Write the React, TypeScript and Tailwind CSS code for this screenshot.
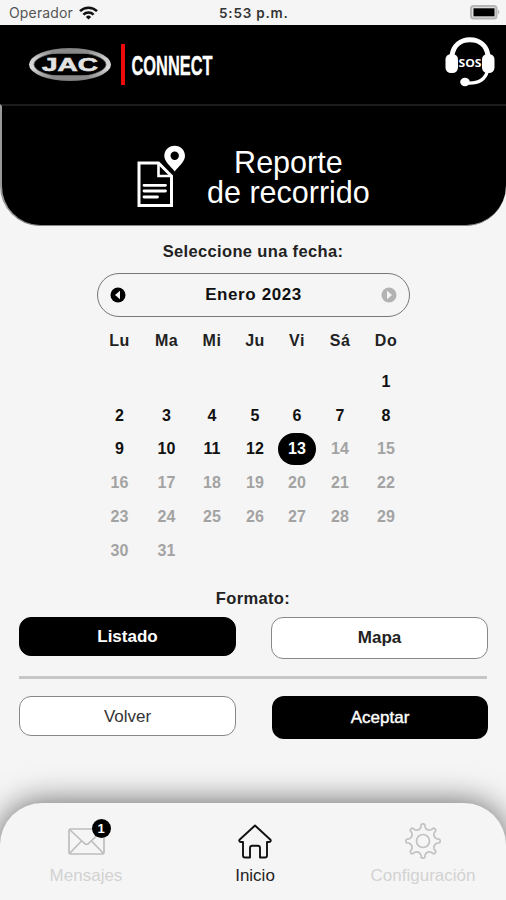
import clsx from "clsx";
import { useState } from "react";

const WEEKDAYS = ["Lu", "Ma", "Mi", "Ju", "Vi", "Sá", "Do"];
const TODAY = 13;
// January 2023 starts on a Sunday
const FIRST_OFFSET = 6;
const DAYS = 31;

const calendarGrid =
  "grid grid-cols-[45px_49px_42px_44px_40px_46px_46px] justify-items-center items-center";

function polar(radius: number, degrees: number) {
  const a = (degrees * Math.PI) / 180;
  return `${(18 + radius * Math.sin(a)).toFixed(2)} ${(18 - radius * Math.cos(a)).toFixed(2)}`;
}

// Eight teeth with rounded valleys between them
const gearPath =
  Array.from({ length: 8 }, (_, i) => {
    const t = i * 45;
    return `${i === 0 ? "M" : "L"}${polar(16.6, t - 6)}Q${polar(17.8, t)} ${polar(16.6, t + 6)}L${polar(
      13.9,
      t + 9
    )}Q${polar(10.8, t + 22.5)} ${polar(13.9, t + 36)}`;
  }).join("") + "Z";

function StatusBar() {
  return (
    <div className="relative h-[25px] flex items-center justify-between pl-[9px] pr-[6px] font-['Inter',sans-serif]">
      <div className="flex items-center gap-[6px]">
        <span className="text-[14px] leading-[25px] tracking-[0.15px] text-[#555]">
          Operador
        </span>
        <svg width="19" height="14" viewBox="0 0 19 14" fill="none" stroke="#111" strokeWidth="2.5">
          <path d="M1 5.2a12.2 12.2 0 0 1 17 0" />
          <path d="M4.4 8.7a7.3 7.3 0 0 1 10.2 0" />
          <path d="M9.5 13.4 6.9 10.9a3.7 3.7 0 0 1 5.2 0z" fill="#111" stroke="none" />
        </svg>
      </div>
      <span className="absolute left-[219px] top-[1px] text-[13.5px] leading-[25px] font-semibold tracking-[0.8px] text-[#333] whitespace-nowrap">
        5:53 p.m.
      </span>
      <svg width="30" height="15" viewBox="0 0 30 15">
        <rect x="1" y="1" width="25.5" height="12.5" rx="2.5" fill="#ddd" stroke="#b5b5b5" strokeWidth="2" />
        <rect x="3.5" y="3.3" width="21" height="8" fill="#000" />
        <path d="M28 4.8c1.8.8 1.8 4 0 4.8z" fill="#b5b5b5" />
      </svg>
    </div>
  );
}

function Brand() {
  return (
    <div className="flex items-center">
      <svg width="84" height="36" viewBox="0 0 84 36">
        <defs>
          <linearGradient id="chrome" x1="0" y1="0" x2="0" y2="1">
            <stop offset="0" stopColor="#777" />
            <stop offset="0.3" stopColor="#ccc" />
            <stop offset="0.6" stopColor="#ddd" />
            <stop offset="1" stopColor="#777" />
          </linearGradient>
        </defs>
        <ellipse cx="42" cy="17.5" rx="41" ry="16.5" fill="url(#chrome)" />
        <ellipse cx="42" cy="17.5" rx="36" ry="12.5" fill="#000" stroke="#555" strokeWidth="0.8" />
        <path d="M23 5.5h38M23 29.5h38" stroke="#888" strokeWidth="2.5" />
        <text
          x="14"
          y="23.5"
          textLength="56"
          lengthAdjust="spacingAndGlyphs"
          fontFamily="Liberation Sans, sans-serif"
          fontWeight="700"
          fontSize="18"
          fill="#e2e2e2"
          stroke="#e2e2e2"
          strokeWidth="0.6"
        >
          JAC
        </text>
      </svg>
      <div className="ml-[9px] h-[41px] w-[4px] bg-[#ee0a0a]" />
      <svg className="ml-[5px] overflow-visible" width="90" height="40" viewBox="0 0 90 40">
        <text
          x="1.5"
          y="30"
          textLength="81"
          lengthAdjust="spacingAndGlyphs"
          fontFamily="Liberation Sans, sans-serif"
          fontWeight="700"
          fontSize="28.5"
          fill="#fff"
          stroke="#fff"
          strokeWidth="0.4"
        >
          CONNECT
        </text>
      </svg>
    </div>
  );
}

function SosIcon() {
  return (
    <svg width="50" height="50" viewBox="0 0 50 50" fill="none" stroke="#fff">
      <path d="M7 18.5C8.500 8.500 15.500 2.800 25 2.800S41.500 8.500 43 18.500" strokeWidth="5" />
      <rect x="0.5" y="17" width="12.5" height="19" rx="5.5" fill="#fff" stroke="none" />
      <rect x="37" y="17" width="12.5" height="19" rx="5.5" fill="#fff" stroke="none" />
      <path d="M42.5 34c-2.500 9-9 13-21.500 12" strokeWidth="3.2" />
      <ellipse cx="20" cy="45" rx="4.8" ry="4.2" fill="#fff" stroke="none" />
      <text
        x="13.5"
        y="30"
        textLength="23"
        lengthAdjust="spacingAndGlyphs"
        fontFamily="Open Sans, sans-serif"
        fontWeight="700"
        fontSize="11"
        fill="#fff"
        stroke="none"
      >
        SOS
      </text>
    </svg>
  );
}

function ReportIcon() {
  return (
    <svg width="49" height="63" viewBox="0 0 49 63" fill="none" stroke="#fff">
      <path d="M2 18h19.5l13 13v29.5H2z" strokeWidth="3" />
      <path d="M21.5 18v13h13" strokeWidth="2.6" />
      <path d="M7 40.3h21.5M7 46h21.5M7 52h13.5" strokeWidth="2.8" strokeLinecap="round" />
      <path
        d="M37.7 0.8C31.5 0.8 27.3 5.4 27.3 11c0 5.5 6.5 10.5 10.4 15.5C41.6 21.5 48 16.5 48 11 48 5.4 43.8 0.8 37.7 0.8zM37.7 6.6a4.2 4.2 0 1 1 0 8.4 4.2 4.2 0 0 1 0-8.4z"
        fill="#fff"
        fillRule="evenodd"
        stroke="none"
      />
    </svg>
  );
}

function ArrowButton({ direction, disabled }: { direction: "left" | "right"; disabled?: boolean }) {
  return (
    <button aria-label={direction === "left" ? "Anterior" : "Siguiente"} disabled={disabled}>
      <svg
        width="16"
        height="16"
        viewBox="0 0 16 16"
        className={clsx(disabled ? "text-[#b3b3b3]" : "text-black", direction === "right" && "rotate-180")}
      >
        <circle cx="8" cy="8" r="7.5" fill="currentColor" />
        <path d="M10 3.8v8.4L5 8z" fill="#f5f5f5" />
      </svg>
    </button>
  );
}

function Calendar() {
  const [selected, setSelected] = useState(TODAY);
  const days = Array.from({ length: DAYS }, (_, i) => i + 1);

  return (
    <div className="w-[313px] ml-[97px]">
      <div className="mt-[11px] h-[44px] rounded-full border border-[#777] flex items-center justify-between px-[12px]">
        <ArrowButton direction="left" />
        <span className="text-[17px] font-bold tracking-[0.6px] text-[#111]">Enero 2023</span>
        <ArrowButton direction="right" disabled />
      </div>

      <div className={clsx(calendarGrid, "mt-[12px] h-[24px] text-[16px] font-bold tracking-[0.5px] text-[#222]")}>
        {WEEKDAYS.map((day) => (
          <span key={day}>{day}</span>
        ))}
      </div>

      <div className={clsx(calendarGrid, "mt-[12px] auto-rows-[33.8px] text-[16px] font-bold")}>
        {Array.from({ length: FIRST_OFFSET }, (_, i) => (
          <span key={`empty-${i}`} />
        ))}
        {days.map((day) => (
          <button
            key={day}
            disabled={day > TODAY}
            onClick={() => setSelected(day)}
            className={clsx(
              "w-[38px] h-[32px] rounded-full",
              day === selected && "bg-black text-white",
              day !== selected && (day > TODAY ? "text-[#a3a3a3]" : "text-[#111]")
            )}
          >
            {day}
          </button>
        ))}
      </div>
    </div>
  );
}

function MailIcon() {
  return (
    <svg width="37" height="27" viewBox="0 0 37 27" fill="none" stroke="#bdbdbd" strokeWidth="1.7">
      <rect x="1" y="1" width="35" height="25" rx="1.5" />
      <path d="M1.5 1.5 15.5 14.5c2 2.5 4 2.5 6 0L35.5 1.5M1.5 25.5 13.5 13M35.5 25.5 23.5 13" />
    </svg>
  );
}

function HomeIcon() {
  return (
    <svg width="34" height="35" viewBox="0 0 34 35" fill="none" stroke="#111" strokeWidth="1.9" strokeLinejoin="round">
      <path d="M17 1.5 1.8 15.5c-1 1-.5 2.5 1 2.5H5v13.5c0 1.200.8 2 2 2h5V24c0-1.500.8-2.300 2.300-2.300h5.400c1.500 0 2.300.8 2.300 2.300v9.500h5c1.200 0 2-.8 2-2V18h2.200c1.500 0 2-1.500 1-2.500z" />
    </svg>
  );
}

function GearIcon() {
  return (
    <svg width="36" height="36" viewBox="0 0 36 36" fill="none" stroke="#c2c2c2" strokeWidth="1.7" strokeLinejoin="round">
      <circle cx="18" cy="18" r="6.5" />
      <path d={gearPath} />
    </svg>
  );
}

function BottomNav() {
  return (
    <nav className="h-[97px] shrink-0 rounded-t-[42px] bg-[#f5f5f5] shadow-[0_0_32px_rgba(0,0,0,0.62)] pl-[2px] grid grid-cols-[168px_170px_166px] text-[17px] leading-[20px]">
      <a className="flex flex-col items-center text-[#d2d2d2]">
        <div className="relative h-[63px] pt-[25px]">
          <MailIcon />
          <span className="absolute left-[24px] top-[16px] size-[19px] rounded-full bg-black text-white text-[13px] leading-[19px] font-bold text-center">
            1
          </span>
        </div>
        Mensajes
      </a>
      <a className="flex flex-col items-center text-[#222]">
        <div className="h-[63px] pt-[21px]">
          <HomeIcon />
        </div>
        Inicio
      </a>
      <a className="flex flex-col items-center text-[#d2d2d2]">
        <div className="h-[63px] pt-[20px]">
          <GearIcon />
        </div>
        Configuración
      </a>
    </nav>
  );
}

export default function App() {
  const [format, setFormat] = useState("Listado");

  return (
    <div className="w-[506px] h-[900px] overflow-hidden flex flex-col bg-[#f5f5f5] font-['Liberation_Sans',Arial,sans-serif]">
      <StatusBar />

      <header className="h-[79px] bg-black flex items-center justify-between pl-[28px] pr-[11px]">
        <Brand />
        <div className="-mt-[6px]">
          <SosIcon />
        </div>
      </header>

      <section className="h-[122px] bg-black rounded-b-[40px] border-t-2 border-t-[#1c1c1c] border-l-2 border-l-[#999] border-b border-b-[#888] flex pl-[135px]">
        <div className="mt-[39px]">
          <ReportIcon />
        </div>
        <h1 className="ml-[21px] mt-[41px] text-[30.5px] leading-[30px] text-white text-center whitespace-nowrap">
          Reporte
          <br />
          de recorrido
        </h1>
      </section>

      <main className="flex-1">
        <p className="mt-[14px] text-[16.5px] leading-[22px] font-bold tracking-[0.35px] text-center text-[#222]">
          Seleccione una fecha:
        </p>

        <Calendar />

        <p className="mt-[19px] text-[16.5px] leading-[22px] font-bold tracking-[0.35px] text-center text-[#222]">
          Formato:
        </p>

        <div className="mt-[8px] pl-[19px] pr-[18px] flex items-start justify-between text-[17px] font-bold">
          {["Listado", "Mapa"].map((option) => (
            <button
              key={option}
              onClick={() => setFormat(option)}
              className={clsx(
                "w-[217px] rounded-xl border",
                format === option
                  ? "h-[39px] bg-black border-black text-white"
                  : "h-[42px] bg-white border-[#888] text-[#222]"
              )}
            >
              {option}
            </button>
          ))}
        </div>

        <hr className="mx-[19px] mt-[17px] border-t-[3px] border-[#c6c6c6]" />

        <div className="mt-[17px] pl-[19px] pr-[18px] flex items-start justify-between text-[17px]">
          <button className="w-[217px] h-[40px] pt-[2px] rounded-xl border border-[#888] bg-white text-[#333]">
            Volver
          </button>
          <button className="w-[216px] h-[43px] pt-[1px] rounded-xl bg-black text-white [-webkit-text-stroke:0.4px_white]">
            Aceptar
          </button>
        </div>
      </main>

      <BottomNav />
    </div>
  );
}
